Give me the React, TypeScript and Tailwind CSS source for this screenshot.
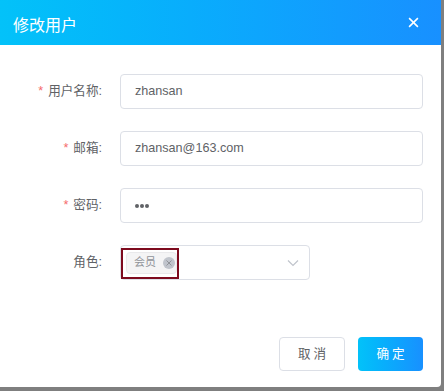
import React from "react";

const font = { fontFamily: '"Liberation Sans", "Noto Sans CJK SC", Arial, sans-serif' };

function Label({ text, required = true }: { text: string; required?: boolean }) {
  return (
    <div className="w-[120px] shrink-0 flex items-center justify-end pr-[18px] text-[12.6px] text-[#606266]">
      {required && <span className="text-[#f56c6c] mr-[5px]">*</span>}
      <span>{text}</span>
    </div>
  );
}

function Input({ value, password = false }: { value: string; password?: boolean }) {
  return (
    <div className="w-[303px] h-[35px] border border-[#dcdfe6] rounded-[4px] flex items-center px-[14px] text-[12.6px] text-[#606266]">
      {password ? (
        <span className="flex gap-[1px] items-center">
          <span className="w-[4px] h-[4px] rounded-full bg-[#606266]" />
          <span className="w-[4px] h-[4px] rounded-full bg-[#606266]" />
          <span className="w-[4px] h-[4px] rounded-full bg-[#606266]" />
        </span>
      ) : (
        value
      )}
    </div>
  );
}

export default function App() {
  return (
    <div className="w-[444px] h-[391px] bg-[#7f7f7f] relative overflow-hidden" style={font}>
      <div className="w-[441px] h-[387px] bg-white rounded-br-[4px] flex flex-col">
        <div className="h-[45px] bg-gradient-to-r from-[#03c2f9] to-[#1890ff] flex items-center justify-between pl-[13px] pr-[22px] pt-[7px]">
          <span className="text-white text-[16px]">修改用户</span>
          <svg width="11" height="11" viewBox="0 0 10 10" className="-mt-[8px]">
            <path d="M1 1L9 9M9 1L1 9" stroke="white" strokeWidth="1.4" />
          </svg>
        </div>
        <div className="flex flex-col gap-[22px] pt-[29px]">
          <div className="flex items-center">
            <Label text="用户名称:" />
            <Input value="zhansan" />
          </div>
          <div className="flex items-center">
            <Label text="邮箱:" />
            <Input value="zhansan@163.com" />
          </div>
          <div className="flex items-center">
            <Label text="密码:" />
            <Input value="" password />
          </div>
          <div className="flex items-center">
            <Label text="角色:" required={false} />
            <div className="w-[190px] h-[35px] border border-[#dcdfe6] rounded-[4px] flex items-center justify-between pr-[10px] relative">
              <div className="ml-[5px] flex items-center h-[22px] bg-[#f4f4f5] border border-[#e9e9eb] rounded-[4px] pl-[7px] pr-[1px] text-[11px] text-[#909399]">
                <span>会员</span>
                <span className="ml-[7px] w-[12px] h-[12px] rounded-full bg-[#c0c4cc] flex items-center justify-center">
                  <svg width="6" height="6" viewBox="0 0 6 6">
                    <path d="M0.5 0.5L5.5 5.5M5.5 0.5L0.5 5.5" stroke="#909399" strokeWidth="1" />
                  </svg>
                </span>
              </div>
              <div className="absolute left-[0px] top-[2px] w-[58px] h-[31px] border-2 border-[#7d0a1e]" />
              <svg width="12" height="8" viewBox="0 0 12 8">
                <path d="M1 1.5L6 6.5L11 1.5" stroke="#c0c4cc" strokeWidth="1.2" fill="none" />
              </svg>
            </div>
          </div>
        </div>
        <div className="flex justify-end gap-[13px] pr-[18px] mt-[57px]">
          <div className="w-[66px] h-[34px] border border-[#dcdfe6] rounded-[4px] flex items-center justify-center text-[12.6px] text-[#606266] tracking-[3px] pl-[3px]">
            取消
          </div>
          <div className="w-[65px] h-[34px] rounded-[4px] bg-gradient-to-r from-[#03c2f9] to-[#1890ff] flex items-center justify-center text-[12.6px] text-white tracking-[3px] pl-[3px]">
            确定
          </div>
        </div>
      </div>
    </div>
  );
}
